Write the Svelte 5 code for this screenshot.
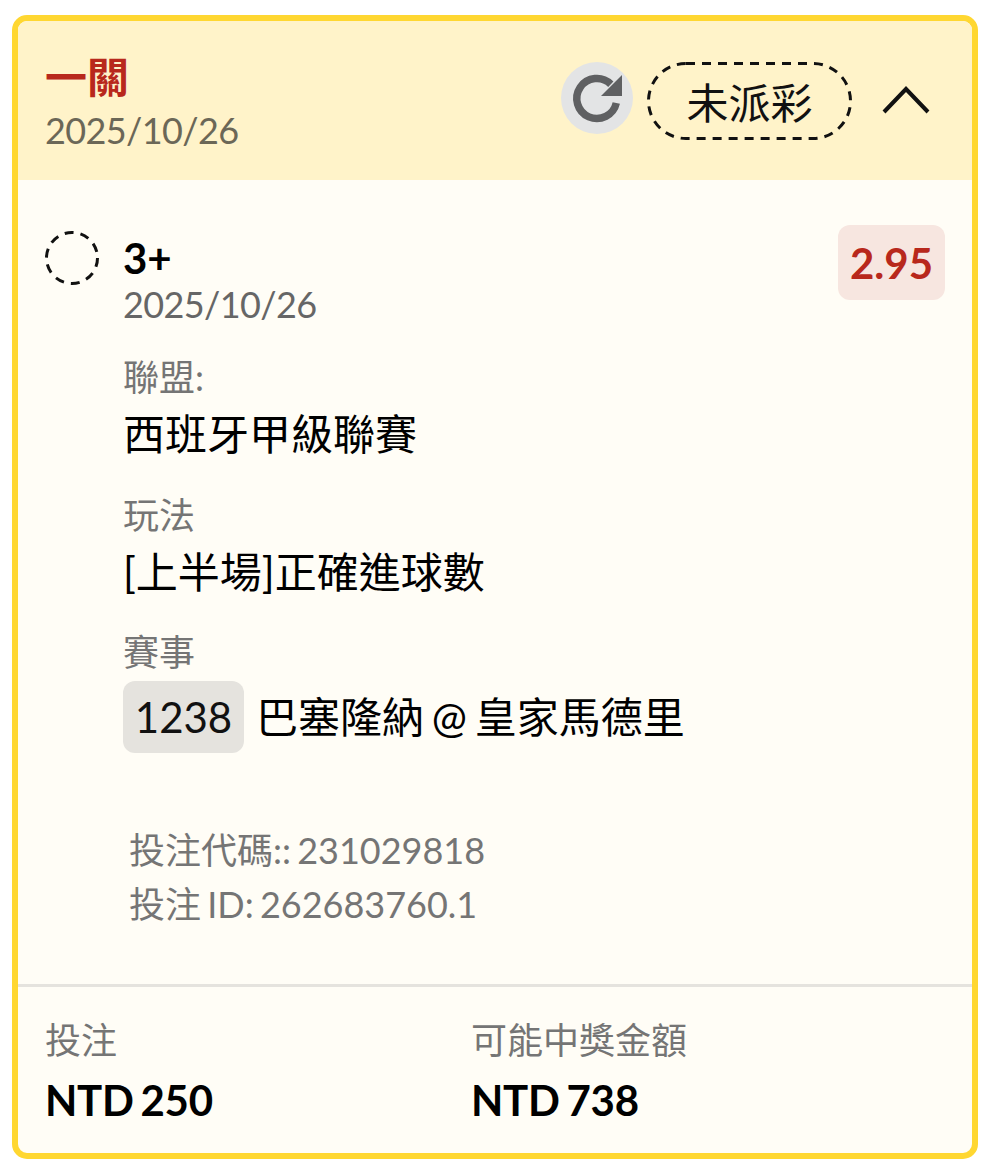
<script>
  const sections = [
    { label: "聯盟:", value: "西班牙甲級聯賽" },
    { label: "玩法", value: "[上半場]正確進球數" },
  ];
</script>

<div class="page">
  <div class="card">
    <header class="head">
      <div class="head-left">
        <div class="title">一關</div>
        <div class="date">2025/10/26</div>
      </div>
      <div class="head-right">
        <button class="refresh" aria-label="refresh">
          <svg viewBox="0 0 60 60" width="60" height="60">
            <path d="M43.8 16.2A20 20 0 1 0 49.3 35" fill="none" stroke="#5f6062" stroke-width="7.5" />
            <path d="M55 7V28H34z" fill="#5f6062" />
          </svg>
        </button>
        <div class="status">
          <svg class="dash" viewBox="0 0 205 78" width="205" height="78">
            <rect x="1.5" y="1.5" width="202" height="75" rx="37.5" fill="none" stroke="#111" stroke-width="3" stroke-dasharray="9 7" />
          </svg>
          未派彩
        </div>
        <svg class="chevron" viewBox="0 0 48 30" width="48" height="30">
          <path d="M2 26 L24 3 L46 26" fill="none" stroke="#111" stroke-width="4" />
        </svg>
      </div>
    </header>

    <section class="body">
      <div class="row">
        <svg class="ring" viewBox="0 0 54 54" width="54" height="54">
          <circle cx="27" cy="27" r="25.5" fill="none" stroke="#111" stroke-width="3" stroke-dasharray="9 7" />
        </svg>
        <div class="main">
          <div class="pick-row">
            <div>
              <div class="pick">3+</div>
              <div class="pick-date">2025/10/26</div>
            </div>
            <div class="odds">2.95</div>
          </div>

          {#each sections as s}
            <div class="field">
              <div class="label">{s.label}</div>
              <div class="value">{s.value}</div>
            </div>
          {/each}

          <div class="field last">
            <div class="label">賽事</div>
            <div class="match">
              <span class="num">1238</span>
              <span class="value">巴塞隆納 @ 皇家馬德里</span>
            </div>
          </div>
        </div>
      </div>

      <div class="codes">
        <div>投注代碼:: 231029818</div>
        <div>投注 ID: 262683760.1</div>
      </div>
    </section>

    <footer class="foot">
      <div class="foot-col">
        <div class="foot-label">投注</div>
        <div class="foot-value">NTD 250</div>
      </div>
      <div class="foot-col">
        <div class="foot-label">可能中獎金額</div>
        <div class="foot-value">NTD 738</div>
      </div>
    </footer>
  </div>
</div>

<style>
  :global(body) {
    margin: 0;
    background: #fff;
  }

  .page {
    padding: 15px 11px 12px 12px;
    font-family: Lato, "Noto Sans CJK TC", sans-serif;
    word-spacing: -3px;
  }

  .card {
    border: 6px solid #ffd731;
    border-radius: 15px;
    background: #fffdf6;
    overflow: hidden;
  }

  .head {
    height: 159px;
    box-sizing: border-box;
    background: #fff3c9;
    padding: 0 42px 0 27px;
    display: flex;
    align-items: center;
    justify-content: space-between;
  }

  .head-left {
    margin-top: 3px;
  }

  .title {
    font-size: 42px;
    line-height: 54px;
    font-weight: 700;
    color: #b8281c;
  }

  .date {
    margin-top: 2px;
    font-size: 36px;
    line-height: 48px;
    letter-spacing: -0.6px;
    color: #6b6757;
  }

  .head-right {
    display: flex;
    align-items: center;
  }

  .refresh {
    width: 72px;
    height: 72px;
    margin-top: -5px;
    border-radius: 50%;
    border: none;
    padding: 0;
    background: #e3e4e5;
    display: flex;
    align-items: center;
    justify-content: center;
  }

  .status {
    position: relative;
    margin-left: 14px;
    width: 205px;
    height: 78px;
    display: flex;
    align-items: center;
    justify-content: center;
    font-size: 42px;
    color: #111;
  }

  .dash {
    position: absolute;
    inset: 0;
  }

  .chevron {
    margin-left: 30px;
  }

  .body {
    padding: 45px 27px 0 27px;
  }

  .row {
    display: flex;
    gap: 24px;
  }

  .ring {
    flex: none;
    margin-top: 6px;
  }

  .main {
    flex: 1;
  }

  .pick-row {
    display: flex;
    justify-content: space-between;
    align-items: flex-start;
  }

  .pick {
    font-size: 42px;
    line-height: 66px;
    font-weight: 700;
    color: #000;
  }

  .pick-date {
    margin-top: -2px;
    font-size: 36px;
    line-height: 30px;
    letter-spacing: -0.6px;
    color: #666;
  }

  .odds {
    width: 107px;
    height: 75px;
    border-radius: 12px;
    background: #f7e6e0;
    color: #b8281c;
    font-size: 42px;
    font-weight: 700;
    display: flex;
    align-items: center;
    justify-content: center;
  }

  .field {
    margin-top: 24px;
  }

  .pick-row + .field {
    margin-top: 34px;
  }

  .field.last {
    margin-top: 23px;
  }

  .label {
    font-size: 36px;
    line-height: 48px;
    color: #757575;
  }

  .value {
    font-size: 42px;
    line-height: 66px;
    color: #000;
  }

  .match {
    margin-top: 5px;
    display: flex;
    align-items: center;
    gap: 12px;
  }

  .num {
    width: 121px;
    height: 72px;
    border-radius: 12px;
    background: #e5e3de;
    font-size: 42px;
    color: #111;
    display: flex;
    align-items: center;
    justify-content: center;
  }

  .codes {
    margin-top: 70px;
    padding-left: 84px;
    padding-bottom: 53px;
    font-size: 36px;
    line-height: 54px;
    color: #757575;
  }

  .foot {
    border-top: 3px solid #e5e3de;
    padding: 29px 27px 26px;
    display: grid;
    grid-template-columns: 426px 1fr;
  }

  .foot-label {
    font-size: 36px;
    line-height: 48px;
    color: #757575;
  }

  .foot-value {
    margin-top: 9px;
    font-size: 42px;
    line-height: 54px;
    font-weight: 700;
    letter-spacing: -0.3px;
    color: #000;
  }
</style>
